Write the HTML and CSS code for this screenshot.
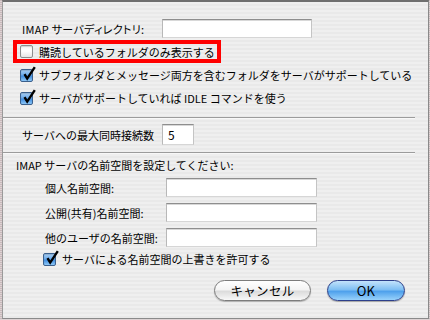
FILE: index.html
```html
<!DOCTYPE html>
<html lang="ja">
<head>
<meta charset="utf-8">
<link rel="stylesheet" href="styles.css">
</head>
<body>
<div class="sheet">
  <div class="row dir-row">
    <span class="label dir-label">IMAP サーバディレクトリ:</span>
    <span class="field dir-field"></span>
  </div>
  <div class="highlight">
    <span class="cb"></span>
    <span class="label">購読しているフォルダのみ表示する</span>
  </div>
  <div class="row check-row">
    <span class="cb checked"><svg viewBox="0 0 16 16" width="16" height="16"><path d="M3.5 8.2 L6.2 12.6 L13.8 1.2" fill="none" stroke="#000" stroke-width="2.4" stroke-linejoin="miter"/></svg></span>
    <span class="label">サブフォルダとメッセージ両方を含むフォルダをサーバがサポートしている</span>
  </div>
  <div class="row check-row row3">
    <span class="cb checked"><svg viewBox="0 0 16 16" width="16" height="16"><path d="M3.5 8.2 L6.2 12.6 L13.8 1.2" fill="none" stroke="#000" stroke-width="2.4" stroke-linejoin="miter"/></svg></span>
    <span class="label">サーバがサポートしていれば IDLE コマンドを使う</span>
  </div>
  <div class="sep sep1"></div>
  <div class="row conn-row">
    <span class="label conn-label">サーバへの最大同時接続数</span>
    <span class="field conn-field">5</span>
  </div>
  <div class="sep sep2"></div>
  <div class="ns-title label">IMAP サーバの名前空間を設定してください:</div>
  <div class="ns-grid">
    <span class="label">個人名前空間:</span><span class="field ns-field"></span>
    <span class="label">公開(共有)名前空間:</span><span class="field ns-field"></span>
    <span class="label">他のユーザの名前空間:</span><span class="field ns-field"></span>
  </div>
  <div class="row override-row">
    <span class="cb checked"><svg viewBox="0 0 16 16" width="16" height="16"><path d="M3.5 8.2 L6.2 12.6 L13.8 1.2" fill="none" stroke="#000" stroke-width="2.4" stroke-linejoin="miter"/></svg></span>
    <span class="label">サーバによる名前空間の上書きを許可する</span>
  </div>
  <div class="buttons">
    <span class="btn cancel">キャンセル</span>
    <span class="btn ok">OK</span>
  </div>
</div>
</body>
</html>
```

FILE: styles.css
```css
html, body {
  margin: 0;
  padding: 0;
}
body {
  width: 430px;
  height: 320px;
  overflow: hidden;
  background: repeating-linear-gradient(#c9b9bb 0 1px, #ddd3d4 1px 2px);
  font-family: "Noto Sans CJK JP", sans-serif;
  font-size: 11px;
  color: #000;
}
.sheet {
  margin-left: 2px;
  width: 425px;
  height: 316px;
  border-top: 2px solid #6f6f6f;
  border-left: 1px solid #9a9a9a;
  border-right: 1px solid #8a8a8a;
  border-bottom: 1px solid #8a8a8a;
  background: repeating-linear-gradient(#efefef 0 2px, #e9e9e9 2px 4px);
}
.label {
  white-space: nowrap;
  line-height: 16px;
}
.row {
  display: flex;
  align-items: center;
}
.field {
  display: block;
  background: #fff;
  border-top: 1px solid #8e8e8e;
  border-left: 1px solid #b8b8b8;
  border-right: 1px solid #c4c4c4;
  border-bottom: 1px solid #d6d6d6;
  box-sizing: border-box;
  box-shadow: inset 0 1px 0 #d8d8d8;
}
.dir-row {
  margin-top: 17px;
  padding-left: 19px;
  height: 19px;
}
.dir-label {
  width: 140px;
  font-feature-settings: "palt";
  letter-spacing: 0.3px;
}
.dir-field {
  width: 150px;
  height: 19px;
}
.highlight {
  margin-top: 2px;
  margin-left: 10px;
  width: 208px;
  height: 23px;
  box-sizing: border-box;
  border: 4px solid #ff0000;
  display: flex;
  align-items: center;
  padding-left: 3px;
}
.cb {
  width: 13px;
  height: 13px;
  flex: none;
  box-sizing: border-box;
  border: 1px solid #8d8d8d;
  border-radius: 2px;
  background: linear-gradient(#f4f4f4, #ffffff 45%, #e6e6e6);
  box-shadow: inset 0 1px 1px rgba(0,0,0,0.15);
  margin-right: 6px;
  position: relative;
}
.cb.checked {
  border-color: #3a5f8c;
  background: linear-gradient(#a9d0f5 0%, #6ba9e8 45%, #3f8de0 55%, #8cc6f6 100%);
}
.cb svg {
  position: absolute;
  left: 0px;
  top: -4px;
}
.check-row {
  margin-top: 3px;
  padding-left: 17px;
  height: 18px;
}
.row3 {
  margin-top: 5px;
}
.sep {
  height: 1px;
  background: #9c9c9c;
  width: 412px;
  box-shadow: 0 1px 0 #f8f8f8;
}
.sep1 {
  margin-top: 10px;
}
.conn-row {
  margin-top: 6px;
  padding-left: 19px;
  height: 21px;
}
.conn-label {
  width: 140px;
}
.conn-field {
  width: 32px;
  height: 21px;
  padding-left: 5px;
  line-height: 20px;
  font-size: 12px;
}
.sep2 {
  margin-top: 7px;
}
.ns-title {
  margin-top: 4px;
  padding-left: 13px;
}
.ns-grid {
  display: grid;
  grid-template-columns: 121px 151px;
  row-gap: 6px;
  align-items: center;
  margin-top: 5px;
  padding-left: 42px;
}
.ns-field {
  height: 19px;
  width: 151px;
}
.override-row {
  margin-top: 3px;
  padding-left: 40px;
  height: 18px;
}
.buttons {
  display: flex;
  gap: 16px;
  margin-top: 12px;
  padding-left: 211px;
}
.btn {
  display: flex;
  align-items: center;
  justify-content: center;
  height: 21px;
  box-sizing: border-box;
  border-radius: 11px;
  font-size: 12.5px;
  letter-spacing: 0.3px;
}
.cancel {
  width: 97px;
  border: 1px solid #7c7c7c;
  background: linear-gradient(#ffffff 0%, #f4f4f4 45%, #dcdcdc 55%, #f8f8f8 100%);
  box-shadow: 0 1px 1px rgba(0,0,0,0.25);
}
.ok {
  width: 78px;
  border: 1px solid #2c3f8a;
  background: linear-gradient(#c3e3fb 0%, #7fbff3 45%, #4fa1ec 55%, #98d2fb 100%);
  box-shadow: 0 1px 1px rgba(0,0,0,0.3);
  font-size: 13px;
}
```
